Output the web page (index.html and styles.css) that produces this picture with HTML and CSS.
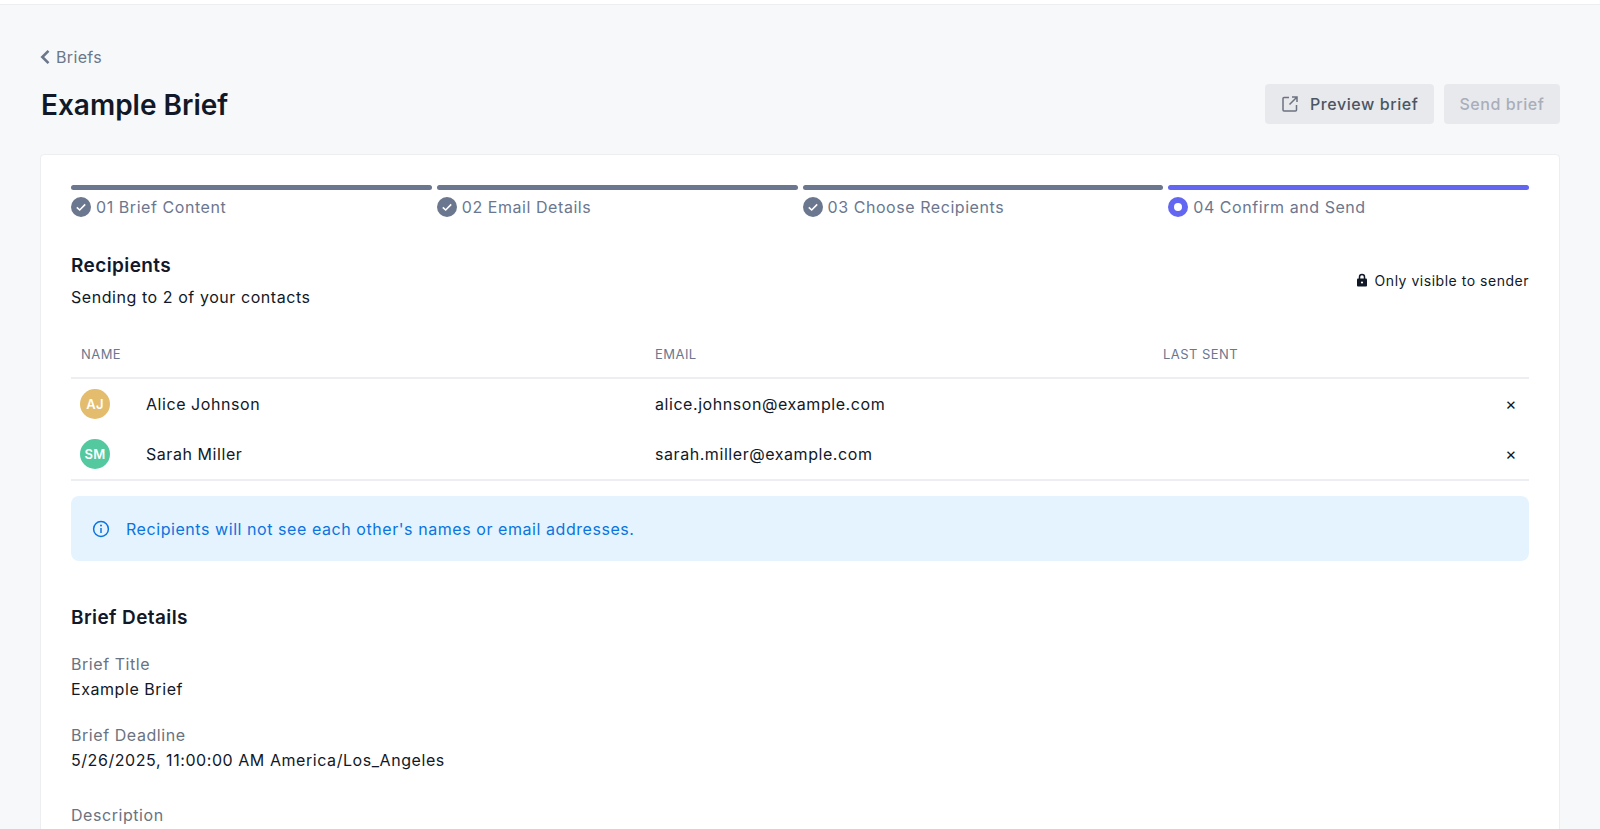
FILE: index.html
```html
<!DOCTYPE html>
<html lang="en">
<head>
<meta charset="utf-8">
<title>Example Brief</title>
<link rel="stylesheet" href="styles.css">
</head>
<body>
<div class="topbar"></div>
<main class="page">
  <a class="back"><svg class="back-icon" viewBox="0 0 12 16" width="12" height="16"><path d="M9.500 1.800 3.300 8l6.200 6.200" fill="none" stroke="currentColor" stroke-width="2.600"/></svg>Briefs</a>
  <header class="head">
    <h1 class="title">Example Brief</h1>
    <div class="actions">
      <button class="btn btn-preview"><svg class="btn-icon" viewBox="0 0 18 18" width="18" height="18"><path d="M8 2.500H3a1 1 0 0 0-1 1V15a1 1 0 0 0 1 1h11.500a1 1 0 0 0 1-1v-5M11 2h5v5M16 2 8.500 9.500" fill="none" stroke="currentColor" stroke-width="1.500"/></svg>Preview brief</button>
      <button class="btn btn-send">Send brief</button>
    </div>
  </header>
  <section class="card">
    <ol class="steps">
      <li class="step done"><div class="bar"></div><div class="step-label"><svg class="step-icon" viewBox="0 0 20 20" width="20" height="20"><circle cx="10" cy="10" r="10" fill="#6b778f"/><path d="M5.800 10.300 8.700 13l5.500-5.600" fill="none" stroke="#fff" stroke-width="1.600"/></svg>01 Brief Content</div></li>
      <li class="step done"><div class="bar"></div><div class="step-label"><svg class="step-icon" viewBox="0 0 20 20" width="20" height="20"><circle cx="10" cy="10" r="10" fill="#6b778f"/><path d="M5.800 10.300 8.700 13l5.500-5.600" fill="none" stroke="#fff" stroke-width="1.600"/></svg>02 Email Details</div></li>
      <li class="step done"><div class="bar"></div><div class="step-label"><svg class="step-icon" viewBox="0 0 20 20" width="20" height="20"><circle cx="10" cy="10" r="10" fill="#6b778f"/><path d="M5.800 10.300 8.700 13l5.500-5.600" fill="none" stroke="#fff" stroke-width="1.600"/></svg>03 Choose Recipients</div></li>
      <li class="step current"><div class="bar"></div><div class="step-label"><svg class="step-icon" viewBox="0 0 20 20" width="20" height="20"><circle cx="10" cy="10" r="10" fill="#6366f1"/><circle cx="10" cy="10" r="4" fill="#fff"/></svg>04 Confirm and Send</div></li>
    </ol>

    <div class="rec-head">
      <div>
        <h2 class="section-title">Recipients</h2>
        <p class="rec-sub">Sending to 2 of your contacts</p>
      </div>
      <div class="visibility"><svg class="lock" viewBox="0 0 12 14" width="12" height="14"><path d="M3.500 6V4a2.500 2.500 0 0 1 5 0v2" fill="none" stroke="#111827" stroke-width="1.500"/><rect x="1" y="5.500" width="10" height="8" rx="1" fill="#111827"/><circle cx="6" cy="9.500" r="1.100" fill="#fff"/></svg>Only visible to sender</div>
    </div>

    <table class="table">
      <thead>
        <tr><th class="col-name">Name</th><th class="col-email">Email</th><th class="col-sent">Last sent</th><th class="col-x"></th></tr>
      </thead>
      <tbody>
        <tr>
          <td><div class="person"><span class="avatar avatar-aj">AJ</span>Alice Johnson</div></td>
          <td>alice.johnson@example.com</td><td></td><td class="remove">×</td>
        </tr>
        <tr>
          <td><div class="person"><span class="avatar avatar-sm">SM</span>Sarah Miller</div></td>
          <td>sarah.miller@example.com</td><td></td><td class="remove">×</td>
        </tr>
      </tbody>
    </table>

    <div class="alert"><svg class="alert-icon" viewBox="0 0 18 18" width="18" height="18"><circle cx="9" cy="9" r="7.400" fill="none" stroke="currentColor" stroke-width="1.500"/><path d="M9 8v5" stroke="currentColor" stroke-width="1.500"/><circle cx="9" cy="5.500" r="1" fill="currentColor"/></svg>Recipients will not see each other's names or email addresses.</div>

    <h2 class="section-title details-title">Brief Details</h2>
    <dl class="details">
      <dt>Brief Title</dt><dd>Example Brief</dd>
      <dt>Brief Deadline</dt><dd class="dd-gap">5/26/2025, 11:00:00 AM America/Los_Angeles</dd>
      <dt>Description</dt>
    </dl>
  </section>
</main>
</body>
</html>
```
FILE: styles.css
```css
* { box-sizing: border-box; }
html, body { height: 829px; overflow: hidden; }
body {
  margin: 0;
  background: #f7f8fa;
  color: #111827;
  font-family: Inter, "Noto Sans", sans-serif;
  font-size: 16px;
  letter-spacing: 0.56px;
}
.topbar { height: 5px; background: #fff; border-bottom: 1px solid #eceef1; }
.page { padding: 41px 40px 0; }
.back { display: flex; align-items: center; gap: 5px; height: 22px; color: #6b7789; font-size: 16px; line-height: 22px; letter-spacing: 0.35px; }
.back-icon { display: block; margin-left: -1px; }
.head { display: flex; justify-content: space-between; align-items: center; margin-top: 16px; height: 40px; }
.title { margin: 0 0 0 1px; padding-top: 2px; font-size: 28px; font-weight: 600; line-height: 36px; color: #111827; letter-spacing: 0; }
.actions { display: flex; gap: 10px; }
.btn { display: flex; align-items: center; height: 40px; padding: 0 15.5px; border: 0; border-radius: 4px; background: #e8e9ec; font: inherit; font-size: 16px; font-weight: 500; letter-spacing: 0.58px; }
.btn-preview { color: #4b5563; }
.btn-icon { margin-right: 11px; color: #6b7280; }
.btn-send { color: #a9aeba; }
.card { margin-top: 30px; height: 700px; padding: 30px; background: #fff; border: 1px solid #eceef1; border-radius: 4px; }
.steps { display: grid; grid-template-columns: repeat(4, 1fr); gap: 5px; margin: 0; padding: 0; list-style: none; }
.bar { height: 5px; border-radius: 3px; background: #6b778f; }
.current .bar { background: #6366f1; }
.step-label { display: flex; align-items: center; gap: 5px; margin-top: 5px; height: 24px; color: #6b778f; font-size: 16px; }
.rec-head { display: flex; justify-content: space-between; align-items: center; margin-top: 34px; }
.section-title { margin: 0; font-size: 19px; line-height: 26px; font-weight: 600; color: #111827; letter-spacing: 0.4px; }
.rec-sub { margin: 6px 0 0; font-size: 16px; line-height: 24px; color: #111827; }
.visibility { display: flex; align-items: center; gap: 7px; padding-bottom: 2px; font-size: 14px; letter-spacing: 0.52px; color: #111827; }
.table { width: 100%; margin-top: 22px; border-collapse: collapse; table-layout: fixed; border-bottom: 2px solid #eceef1; }
.table th { height: 47px; padding: 0 10px; border-bottom: 2px solid #eceef1; color: #6b778f; font-size: 13px; font-weight: 400; letter-spacing: 0.45px; text-align: left; text-transform: uppercase; }
.col-name { width: 574px; }
.col-email { width: 508px; }
.col-x { width: 38px; }
.table td { height: 51px; padding: 0 10px; font-size: 16px; color: #111827; }
.person { display: flex; align-items: center; gap: 36px; margin-left: -1px; }
.avatar { display: flex; align-items: center; justify-content: center; width: 30px; height: 30px; border-radius: 50%; color: #fff; font-size: 13px; font-weight: 600; letter-spacing: 0.3px; }
.avatar-aj { background: #e3bc6e; }
.avatar-sm { background: #54c9a0; }
.table td.remove { padding: 0 12px 0 0; text-align: right; font-size: 17px; }
.alert { display: flex; align-items: center; gap: 16px; height: 65px; margin-top: 15px; padding: 0 21px; border-radius: 8px; background: #e4f3fd; color: #0a74e0; font-size: 16px; }
.alert-icon { flex: none; }
.details-title { margin-top: 44px; }
.details { margin: 21px 0 0; }
.details dt { color: #6b7280; font-size: 16px; line-height: 24px; }
.details dd { margin: 1px 0 22px; color: #111827; font-size: 16px; line-height: 24px; }
.details .dd-gap { margin-bottom: 31px; }
```
